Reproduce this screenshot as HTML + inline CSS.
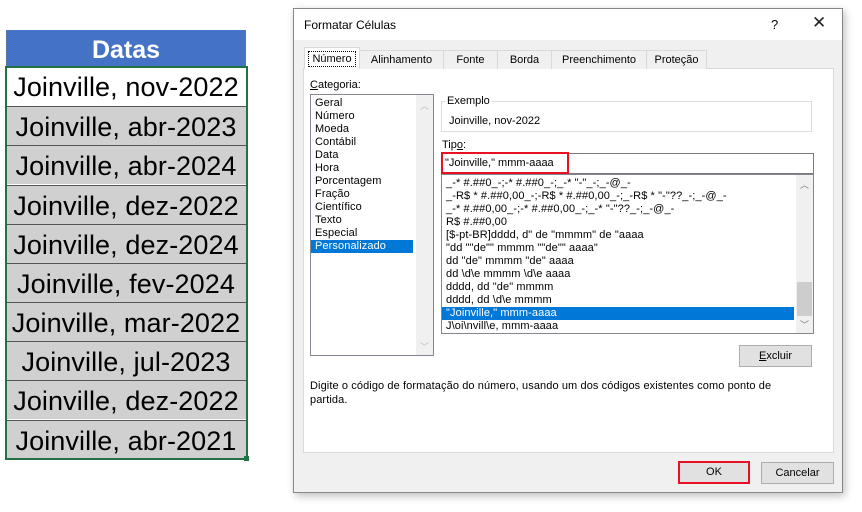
<!DOCTYPE html>
<html><head><meta charset="utf-8"><style>
*{margin:0;padding:0;box-sizing:border-box}
body{width:862px;height:512px;background:#fff;position:relative;overflow:hidden;font-family:"Liberation Sans","DejaVu Sans",sans-serif;font-size:11px;color:#000}
.a{position:absolute}
.cell{position:absolute;left:6px;width:240px;height:39px;border-top:1px solid #555;background:#d0d0d0;font-size:27px;text-align:center;line-height:40px;color:#000;font-family:"Liberation Sans",sans-serif;letter-spacing:0.1px;white-space:nowrap}
.li{height:13px;line-height:13px;padding-left:4px;white-space:nowrap;letter-spacing:0.1px}
.btn{position:absolute;background:#e1e1e1;border:1px solid #adadad;text-align:center;font-size:11px}
.tab{position:absolute;top:50px;height:19px;border:1px solid #d9d9d9;border-bottom:none;background:#f0f0f0;text-align:center;line-height:18px;font-size:11px}
</style></head><body>
<div class="a" style="left:6px;top:30px;width:240px;height:37px;background:#4472c4;color:#fff;font-weight:bold;font-size:25px;text-align:center;line-height:38px;border:1px dotted #777">Datas</div>
<div class="cell" style="top:67px;background:#fff;border-top:none">Joinville, nov-2022</div>
<div class="cell" style="top:106px">Joinville, abr-2023</div>
<div class="cell" style="top:145px">Joinville, abr-2024</div>
<div class="cell" style="top:185px">Joinville, dez-2022</div>
<div class="cell" style="top:224px">Joinville, dez-2024</div>
<div class="cell" style="top:263px">Joinville, fev-2024</div>
<div class="cell" style="top:302px">Joinville, mar-2022</div>
<div class="cell" style="top:341px">Joinville, jul-2023</div>
<div class="cell" style="top:380px">Joinville, dez-2022</div>
<div class="cell" style="top:420px">Joinville, abr-2021</div>
<div class="a" style="left:5px;top:66px;width:243px;height:394px;border:2px solid #217346"></div>
<div class="a" style="left:244px;top:456px;width:5px;height:5px;background:#217346"></div>

<div class="a" style="left:293px;top:8px;width:550px;height:485px;background:#f0f0f0;border:1px solid #888;box-shadow:2px 3px 8px rgba(0,0,0,.25)"></div>
<div class="a" style="left:294px;top:9px;width:548px;height:31px;background:#fff"></div>
<div class="a" style="left:304px;top:18px;font-size:12px">Formatar Células</div>
<div class="a" style="left:771px;top:17px;font-size:13px">?</div>
<div class="a" style="left:812px;top:13px;font-size:17px;color:#222">✕</div>

<div class="a" style="left:303px;top:68px;width:531px;height:385px;background:#fff;border:1px solid #d9d9d9"></div>
<div class="tab" style="left:359px;width:85px">Alinhamento</div>
<div class="tab" style="left:443px;width:55px">Fonte</div>
<div class="tab" style="left:497px;width:55px">Borda</div>
<div class="tab" style="left:551px;width:96px">Preenchimento</div>
<div class="tab" style="left:646px;width:61px">Proteção</div>
<div class="a" style="left:304px;top:47px;width:56px;height:22px;background:#fff;border:1px solid #d9d9d9;border-bottom:none"></div>
<div class="a" style="left:308px;top:51px;width:48px;height:16px;border:1px dotted #000;line-height:14px;text-align:center">Número</div>

<div class="a" style="left:310px;top:79px"><u>C</u>ategoria:</div>
<div class="a" style="left:310px;top:94px;width:124px;height:262px;border:1px solid #828790;background:#fff;padding-top:2px">
<div class="li">Geral</div><div class="li">Número</div><div class="li">Moeda</div><div class="li">Contábil</div><div class="li">Data</div><div class="li">Hora</div><div class="li">Porcentagem</div><div class="li">Fração</div><div class="li">Científico</div><div class="li">Texto</div><div class="li">Especial</div><div class="li" style="background:#0078d7;color:#fff;width:102px">Personalizado</div>
<div class="a" style="right:0;top:0;width:17px;height:260px;background:#f0f0f0;color:#bbb;font-size:9px;text-align:center"><div style="margin-top:4px">︿</div><div style="position:absolute;bottom:2px;width:17px">﹀</div></div>
</div>

<div class="a" style="left:441px;top:101px;width:371px;height:31px;border:1px solid #dcdcdc"></div>
<div class="a" style="left:445px;top:95px;background:#fff;padding:0 2px">Exemplo</div>
<div class="a" style="left:449px;top:115px">Joinville, nov-2022</div>

<div class="a" style="left:442px;top:139px">Tip<u>o</u>:</div>
<div class="a" style="left:441px;top:153px;width:373px;height:21px;border:1px solid #7a7a7a;background:#fff"></div>
<div class="a" style="left:441px;top:152px;width:128px;height:22px;border:2px solid #e81123"></div>
<div class="a" style="left:445px;top:157px">"Joinville," mmm-aaaa</div>

<div class="a" style="left:441px;top:174px;width:373px;height:160px;border:1px solid #828790;background:#fff;padding-top:2px">
<div class="li">_-* #.##0_-;-* #.##0_-;_-* "-"_-;_-@_-</div>
<div class="li">_-R$ * #.##0,00_-;-R$ * #.##0,00_-;_-R$ * "-"??_-;_-@_-</div>
<div class="li">_-* #.##0,00_-;-* #.##0,00_-;_-* "-"??_-;_-@_-</div>
<div class="li">R$ #.##0,00</div>
<div class="li">[$-pt-BR]dddd, d" de "mmmm" de "aaaa</div>
<div class="li">"dd ""de"" mmmm ""de"" aaaa"</div>
<div class="li">dd "de" mmmm "de" aaaa</div>
<div class="li">dd \d\e mmmm \d\e aaaa</div>
<div class="li">dddd, dd "de" mmmm</div>
<div class="li">dddd, dd \d\e mmmm</div>
<div class="li" style="background:#0078d7;color:#fff;width:352px">"Joinville," mmm-aaaa</div>
<div class="li">J\oi\nvill\e, mmm-aaaa</div>
<div class="a" style="right:0;top:0;width:17px;height:158px;background:#f0f0f0;color:#777;font-size:9px;text-align:center"><div style="margin-top:3px">︿</div><div style="position:absolute;left:1px;top:107px;width:15px;height:34px;background:#cdcdcd"></div><div style="position:absolute;bottom:2px;width:17px">﹀</div></div>
</div>

<div class="btn" style="left:739px;top:345px;width:73px;height:22px;line-height:20px"><u>E</u>xcluir</div>
<div class="a" style="left:310px;top:379px;width:480px;line-height:14px;letter-spacing:0.1px">Digite o código de formatação do número, usando um dos códigos existentes como ponto de partida.</div>

<div class="btn" style="left:678px;top:461px;width:72px;height:23px;line-height:19px;border:2px solid #e81123">OK</div>
<div class="btn" style="left:761px;top:462px;width:73px;height:22px;line-height:20px">Cancelar</div>
</body></html>
